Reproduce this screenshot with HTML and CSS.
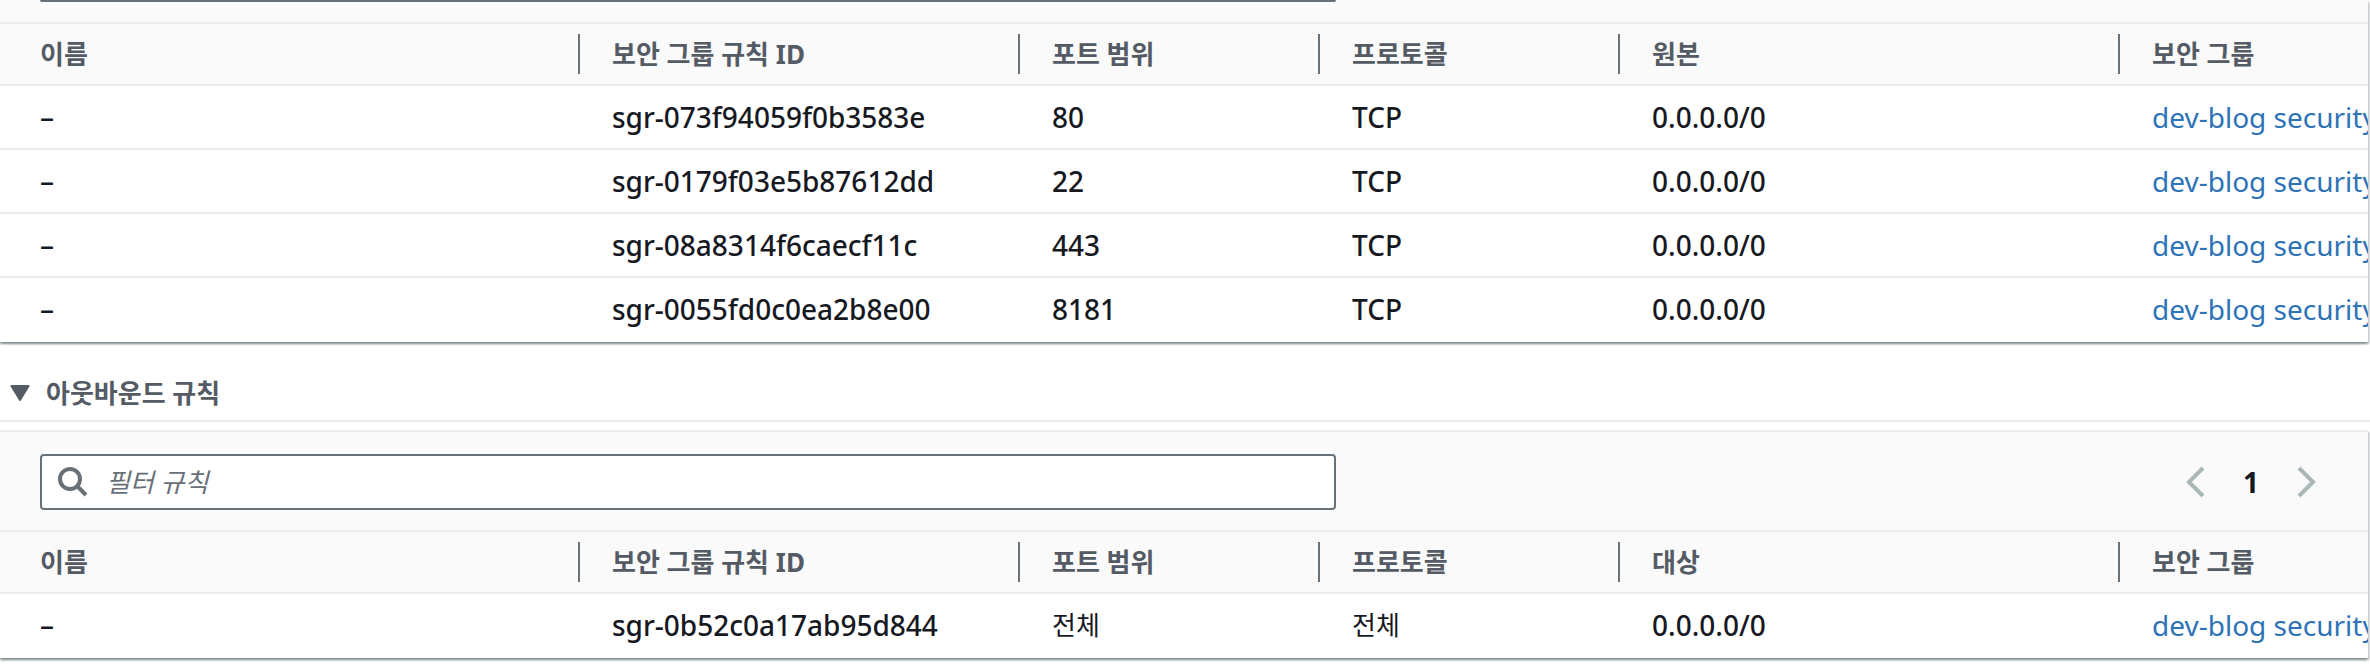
FILE: index.html
```html
<!DOCTYPE html>
<html lang="ko">
<head>
<meta charset="utf-8">
<title>보안 그룹 규칙</title>
<link rel="stylesheet" href="styles.css">
</head>
<body>
<section class="panel">
  <div class="panel-edge"><div class="edge-line"></div></div>
  <table class="rules">
    <colgroup><col class="c-name"><col class="c-id"><col class="c-port"><col class="c-proto"><col class="c-source"><col></colgroup>
    <thead>
      <tr><th scope="col"><div class="head">이름</div></th><th scope="col"><div class="head">보안 그룹 규칙 ID</div></th><th scope="col"><div class="head">포트 범위</div></th><th scope="col"><div class="head">프로토콜</div></th><th scope="col"><div class="head">원본</div></th><th scope="col"><div class="head">보안 그룹</div></th></tr>
    </thead>
    <tbody>
      <tr><td>–</td><td>sgr-073f94059f0b3583e</td><td>80</td><td>TCP</td><td>0.0.0.0/0</td><td><a href="#">dev-blog security</a></td></tr>
      <tr><td>–</td><td>sgr-0179f03e5b87612dd</td><td>22</td><td>TCP</td><td>0.0.0.0/0</td><td><a href="#">dev-blog security</a></td></tr>
      <tr><td>–</td><td>sgr-08a8314f6caecf11c</td><td>443</td><td>TCP</td><td>0.0.0.0/0</td><td><a href="#">dev-blog security</a></td></tr>
      <tr><td>–</td><td>sgr-0055fd0c0ea2b8e00</td><td>8181</td><td>TCP</td><td>0.0.0.0/0</td><td><a href="#">dev-blog security</a></td></tr>
    </tbody>
  </table>
</section>

<button class="expander" type="button" aria-expanded="true">
  <svg class="caret" viewBox="0 0 20 16" aria-hidden="true"><path d="M1.500 1h17L10 15z"/></svg>
  <span>아웃바운드 규칙</span>
</button>

<section class="panel panel-top">
  <div class="toolbar">
    <div class="search">
      <svg class="search-icon" viewBox="0 0 32 32" aria-hidden="true"><circle cx="14" cy="13" r="10"/><path d="M21 20l9 9"/></svg>
      <input class="search-input" type="text" placeholder="필터 규칙" aria-label="필터 규칙">
    </div>
    <nav class="pager" aria-label="페이지">
      <button class="arrow" type="button" aria-label="이전"><svg viewBox="0 0 20 32"><path d="M17 2L3 16l14 14"/></svg></button>
      <button class="page" type="button">1</button>
      <button class="arrow" type="button" aria-label="다음"><svg viewBox="0 0 20 32"><path d="M3 2l14 14L3 30"/></svg></button>
    </nav>
  </div>
  <table class="rules">
    <colgroup><col class="c-name"><col class="c-id"><col class="c-port"><col class="c-proto"><col class="c-source"><col></colgroup>
    <thead>
      <tr><th scope="col"><div class="head">이름</div></th><th scope="col"><div class="head">보안 그룹 규칙 ID</div></th><th scope="col"><div class="head">포트 범위</div></th><th scope="col"><div class="head">프로토콜</div></th><th scope="col"><div class="head">대상</div></th><th scope="col"><div class="head">보안 그룹</div></th></tr>
    </thead>
    <tbody>
      <tr><td>–</td><td>sgr-0b52c0a17ab95d844</td><td class="ko">전체</td><td class="ko">전체</td><td>0.0.0.0/0</td><td><a href="#">dev-blog security</a></td></tr>
    </tbody>
  </table>
</section>
</body>
</html>
```

FILE: styles.css
```css
* { box-sizing: border-box; }
body {
  min-height: 100vh;
  margin: 0;
  overflow-x: hidden;
  background: #fff;
  color: #16191f;
  font-family: "Noto Sans", "Noto Sans CJK KR", sans-serif;
  font-size: 28px;
  font-weight: 500;
  line-height: 40px;
}
button, input { font: inherit; color: inherit; }
button { margin: 0; padding: 0; border: 0; background: none; }

.panel {
  margin-right: 2px;
  background: #fff;
  box-shadow: 0 2px 2px 0 rgba(0, 28, 36, .3), 2px 2px 2px 0 rgba(0, 28, 36, .15), -2px 2px 2px 0 rgba(0, 28, 36, .15);
}
.panel-top { border-top: 2px solid #eaeded; }
.panel-edge { height: 22px; padding: 0 40px; background: #fafafa; }
.edge-line { width: 1296px; height: 2px; background: #687078; border-radius: 0 0 2px 2px; }

.rules { width: 100%; table-layout: fixed; border-collapse: separate; border-spacing: 0; }
.c-name { width: 580px; }
.c-id { width: 440px; }
.c-port, .c-proto { width: 300px; }
.c-source { width: 500px; }
.rules th {
  height: 64px;
  padding: 0;
  border-top: 2px solid #eaeded;
  border-bottom: 2px solid #eaeded;
  background: #fafafa;
  color: #545b64;
  font-size: 26px;
  font-weight: 700;
  text-align: left;
}
.head { padding-left: 32px; border-right: 2px solid #687078; white-space: nowrap; }
th:last-child .head { border-right: 0; }
.rules td {
  height: 64px;
  padding: 0 0 0 32px;
  border-bottom: 2px solid #eaeded;
  overflow: hidden;
  white-space: nowrap;
}
.rules tr > td:first-child, th:first-child .head { padding-left: 40px; }
.rules tbody tr:last-child td { border-bottom-color: transparent; }
.rules td.ko { font-size: 26px; font-weight: 400; }
a { color: #2e73b8; font-weight: 400; text-decoration: none; }

.expander {
  display: flex;
  align-items: center;
  gap: 16px;
  width: 100%;
  height: 80px;
  margin-bottom: 8px;
  padding: 24px 0 0 10px;
  border-bottom: 2px solid #eaeded;
  color: #545b64;
  font-size: 26px;
  font-weight: 700;
}
.caret { width: 20px; height: 16px; fill: #545b64; stroke: #545b64; stroke-width: 2; stroke-linejoin: round; }

.toolbar {
  display: flex;
  align-items: center;
  justify-content: space-between;
  padding: 22px 52px 20px 40px;
  background: #fafafa;
}
.search {
  display: flex;
  align-items: center;
  gap: 18px;
  width: 1296px;
  height: 56px;
  padding: 0 14px;
  border: 2px solid #687078;
  border-radius: 4px;
  background: #fff;
}
.search-icon { width: 32px; height: 32px; fill: none; stroke: #687078; stroke-width: 4; }
.search-input { flex: 1; min-width: 0; height: 40px; padding: 0; border: 0; outline: 0; background: none; font-size: 26px; font-weight: 400; font-style: italic; }
.search-input::placeholder { color: #687078; opacity: 1; }
.pager { display: flex; align-items: center; gap: 37px; }
.arrow { display: flex; }
.arrow svg { width: 20px; height: 32px; fill: none; stroke: #aab7b8; stroke-width: 4; }
.page { font-weight: 700; }
```
